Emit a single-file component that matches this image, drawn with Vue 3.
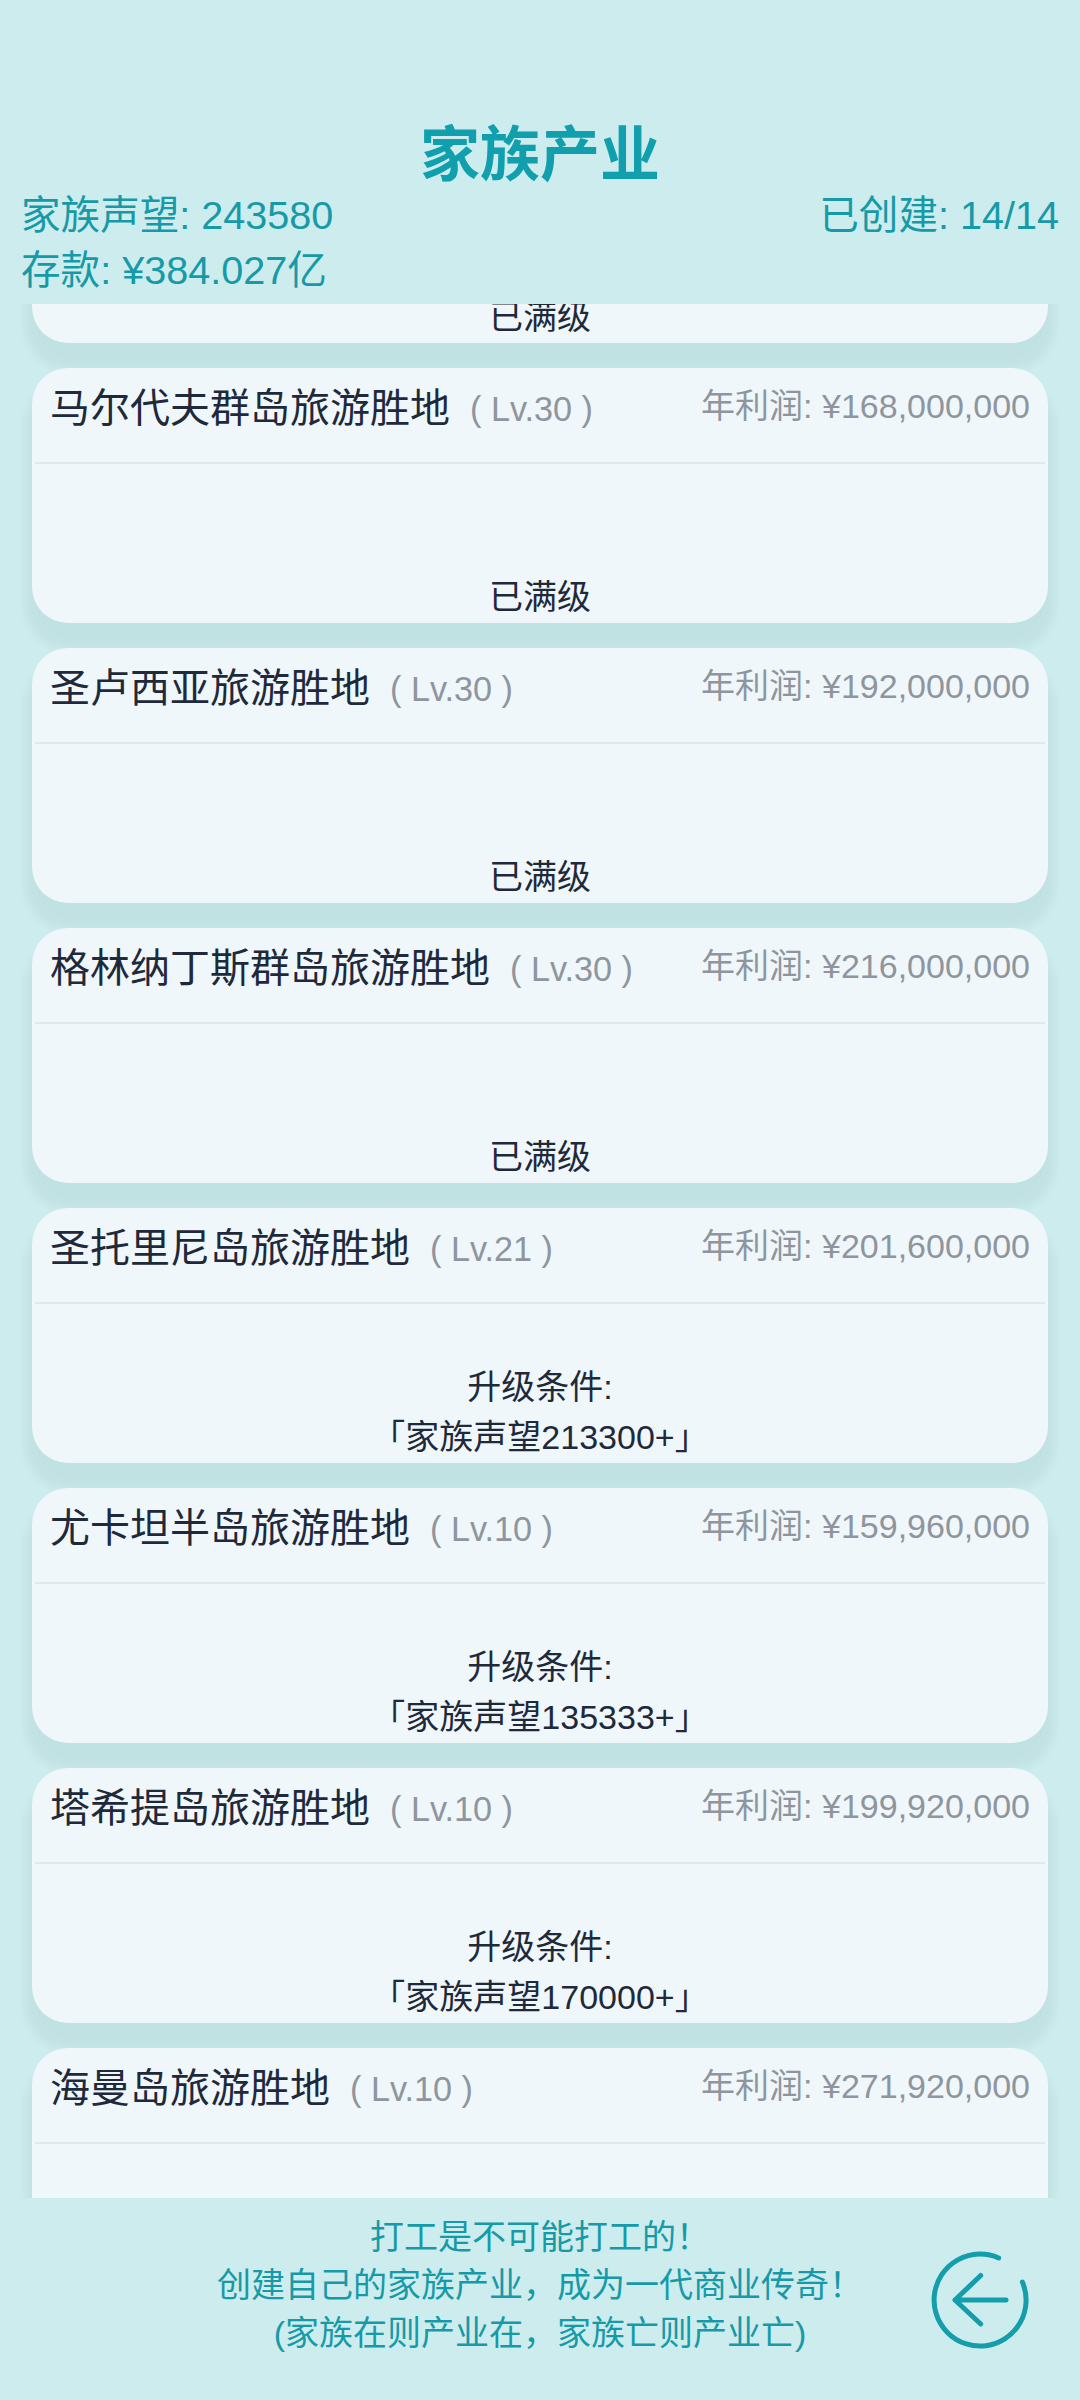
<script setup>
const cards = [
  { name: '巴厘岛旅游胜地', level: 30, profit: '144,000,000', maxed: true },
  { name: '马尔代夫群岛旅游胜地', level: 30, profit: '168,000,000', maxed: true },
  { name: '圣卢西亚旅游胜地', level: 30, profit: '192,000,000', maxed: true },
  { name: '格林纳丁斯群岛旅游胜地', level: 30, profit: '216,000,000', maxed: true },
  { name: '圣托里尼岛旅游胜地', level: 21, profit: '201,600,000', need: 213300 },
  { name: '尤卡坦半岛旅游胜地', level: 10, profit: '159,960,000', need: 135333 },
  { name: '塔希提岛旅游胜地', level: 10, profit: '199,920,000', need: 170000 },
  { name: '海曼岛旅游胜地', level: 10, profit: '271,920,000', need: 210000 }
]
</script>

<template>
  <div class="page">
    <header class="top">
      <h1 class="title">家族产业</h1>
      <div class="stats">
        <span>家族声望: 243580</span>
        <span>已创建: 14/14</span>
        <span>存款: ¥384.027亿</span>
      </div>
    </header>

    <main class="list">
      <div class="scroller">
        <section v-for="card in cards" :key="card.name" class="card">
          <div class="card-head">
            <div class="name">
              {{ card.name }}<span class="level">( Lv.{{ card.level }} )</span>
            </div>
            <div class="profit">年利润: ¥{{ card.profit }}</div>
          </div>
          <div class="card-body">
            <div v-if="card.maxed">已满级</div>
            <template v-else>
              <div>升级条件:</div>
              <div>「家族声望{{ card.need }}+」</div>
            </template>
          </div>
        </section>
      </div>
    </main>

    <footer class="bottom">
      <div></div>
      <p class="slogan">
        打工是不可能打工的！<br>
        创建自己的家族产业，成为一代商业传奇！<br>
        (家族在则产业在，家族亡则产业亡)
      </p>
      <button class="back" type="button" aria-label="返回">
        <svg viewBox="0 0 100 100" width="100" height="100" fill="none" stroke="#149eab" stroke-width="5" stroke-linecap="round" stroke-linejoin="round">
          <path d="M68.7 8 A46 46 0 1 0 92.4 32" />
          <path d="M25 50 H76 M50.7 25.5 L25 50 L50.7 74" />
        </svg>
      </button>
    </footer>
  </div>
</template>

<style>
html, body {
  margin: 0;
  background: #cdecee;
}
</style>

<style scoped>
.page {
  width: 1080px;
  height: 2400px;
  display: flex;
  flex-direction: column;
  overflow: hidden;
  background: #cdecee;
  font-family: "Liberation Sans", "Noto Sans CJK SC", sans-serif;
}

.top {
  position: relative;
  z-index: 1;
  height: 304px;
  padding: 124px 21px 0;
  box-sizing: border-box;
  color: #179aa8;
  background: #cdecee;
  flex: none;
}

.title {
  margin: 0;
  font-size: 60px;
  line-height: 64px;
  font-weight: 700;
  text-align: center;
  color: #119fae;
}

.stats {
  display: grid;
  grid-template-columns: 1fr auto;
  font-size: 39.6px;
  line-height: 55px;
}

.list {
  flex: 1;
  overflow: hidden;
  min-height: 0;
}

.scroller {
  margin-top: -216px;
  padding: 0 32px;
  display: flex;
  flex-direction: column;
  gap: 25px;
}

.card {
  height: 255px;
  flex: none;
  display: flex;
  flex-direction: column;
  background: #eff7fa;
  border-radius: 36px;
  box-shadow: 0 20px 8px 6px rgba(0, 50, 60, 0.055);
  color: #1e293b;
}

.card-head {
  height: 94px;
  margin: 0 3px;
  padding: 0 15px;
  display: flex;
  justify-content: space-between;
  border-bottom: 2px solid #dfe8ec;
  flex: none;
}

.name {
  font-size: 40px;
  line-height: 50px;
  padding-top: 15px;
}

.level {
  position: relative;
  top: -1px;
  margin-left: 20px;
  font-size: 34.2px;
  color: #8f959e;
}

.profit {
  font-size: 34px;
  line-height: 44px;
  padding-top: 16px;
  color: #8f959e;
}

.card-body {
  flex: 1;
  display: flex;
  flex-direction: column;
  justify-content: flex-end;
  padding-bottom: 1px;
  font-size: 34px;
  line-height: 50px;
  text-align: center;
}

.bottom {
  position: relative;
  z-index: 1;
  height: 202px;
  flex: none;
  display: grid;
  grid-template-columns: 1fr auto 1fr;
  align-items: start;
  background: #cdecee;
}

.slogan {
  margin: 0;
  padding-top: 15px;
  font-size: 34px;
  line-height: 48px;
  text-align: center;
  color: #179aa8;
}

.back {
  justify-self: end;
  width: 100px;
  height: 100px;
  margin: 52px 50px 0 0;
  padding: 0;
  border: none;
  background: none;
}
</style>
